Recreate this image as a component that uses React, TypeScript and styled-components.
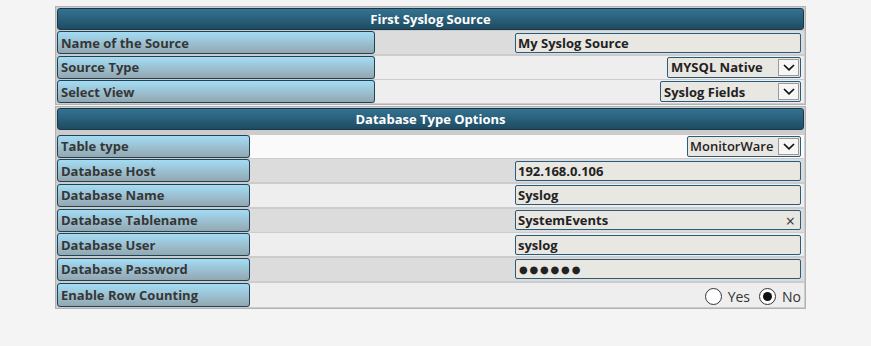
import React from 'react'
import styled, { createGlobalStyle } from 'styled-components'

const GlobalStyle = createGlobalStyle`
  body {
    margin: 0;
    background: #f4f4f4;
    font-family: 'Open Sans', 'DejaVu Sans', sans-serif;
  }
`

interface Row {
  label: string,
  bg: string,
  field: React.ReactNode,
}

const Page = styled.div`
  padding: 6px 0 0 55px;
  width: 751px;
`

const Section = styled.div<{ $after: number }>`
  border: 1px solid #b2b2b2;
  background: #cccccc;
  padding: 1px;
  display: flex;
  flex-direction: column;
  gap: 1.67px;
  margin-bottom: 0.67px;

  > :first-child {
    margin-bottom: ${props => props.$after}px;
  }
`

const Header = styled.div`
  height: 22px;
  box-sizing: border-box;
  border: 1px solid #17374a;
  border-radius: 3px;
  background: linear-gradient(#347392, #1f4b62);
  color: #ffffff;
  font-size: 13px;
  font-weight: 700;
  display: flex;
  align-items: center;
  justify-content: center;
`

const RowLine = styled.div<{ $tall?: boolean }>`
  display: flex;
  height: ${props => (props.$tall ? 24 : 23)}px;
`

const Label = styled.div<{ $width: number }>`
  width: ${props => props.$width}px;
  flex: none;
  box-sizing: border-box;
  border: 1px solid #1e4357;
  border-radius: 3px;
  background: linear-gradient(#a3dcf4, #93a7b1);
  color: #363636;
  font-size: 13px;
  font-weight: 700;
  padding-left: 3px;
  display: flex;
  align-items: center;
`

const Value = styled.div<{ $bg: string }>`
  flex: 1;
  background: ${props => props.$bg};
  display: flex;
  align-items: center;
  justify-content: flex-end;
  padding-right: 3px;
`

const Field = styled.div`
  position: relative;
  width: 286px;
  height: 20px;
  box-sizing: border-box;
  border: 1px solid #2b5b7b;
  border-radius: 2px;
  background: #e9e7e2;
  color: #222222;
  font-size: 13px;
  font-weight: 700;
  padding-left: 2px;
  display: flex;
  align-items: center;
`

const Dots = styled.span`
  font-size: 10px;
  letter-spacing: 1.8px;
  padding-left: 1px;
`

const Clear = styled.span`
  position: absolute;
  right: 5px;
  top: -1px;
  font-size: 16px;
  font-weight: 400;
  color: #333333;
`

const Select = styled.div<{ $width: number, $light?: boolean }>`
  width: ${props => props.$width}px;
  height: 21px;
  box-sizing: border-box;
  border: 1px solid #2b5b7b;
  border-radius: 2px;
  background: #e9e7e2;
  color: #222222;
  font-size: 13px;
  font-weight: ${props => (props.$light ? 600 : 700)};
  display: flex;
  align-items: center;
  padding-left: ${props => (props.$light ? 2 : 3)}px;
`

const SelectText = styled.span`
  flex: 1;
  white-space: nowrap;
`

const Arrow = styled.span`
  width: 21px;
  height: 17px;
  flex: none;
  margin-right: 1px;
  box-sizing: border-box;
  border: 1px solid #9a9a9a;
  background: #f6f6f6;
  display: flex;
  align-items: center;
  justify-content: center;
`

const Radios = styled.div`
  display: flex;
  align-items: center;
  font-size: 14px;
  color: #333333;
  padding-top: 3px;
`

const Radio = styled.span<{ $checked?: boolean }>`
  width: 17px;
  height: 17px;
  box-sizing: border-box;
  border-radius: 50%;
  border: 1px solid #333333;
  background: #ffffff;
  display: inline-flex;
  align-items: center;
  justify-content: center;
  margin: 0 6px 0 9px;

  &::after {
    content: '';
    width: 9px;
    height: 9px;
    border-radius: 50%;
    background: ${props => (props.$checked ? '#111111' : 'transparent')};
  }
`

const Chevron = () => (
  <svg width="12" height="7" viewBox="0 0 12 7">
    <path d="M1 1 L6 5.8 L11 1" fill="none" stroke="#111" strokeWidth="1.7" />
  </svg>
)

const DropDown = ({ text, width, light }: { text: string, width: number, light?: boolean }) => (
  <Select $width={width} $light={light}>
    <SelectText>{text}</SelectText>
    <Arrow><Chevron /></Arrow>
  </Select>
)

const sourceRows: Row[] = [
  { label: 'Name of the Source', bg: '#dcdcdc', field: <Field>My Syslog Source</Field> },
  { label: 'Source Type', bg: '#eeeeee', field: <DropDown text="MYSQL Native" width={134} /> },
  { label: 'Select View', bg: '#eeeeee', field: <DropDown text="Syslog Fields" width={141} /> },
]

const dbRows: Row[] = [
  { label: 'Table type', bg: '#fafafa', field: <DropDown text="MonitorWare" width={114} light /> },
  { label: 'Database Host', bg: '#dcdcdc', field: <Field>192.168.0.106</Field> },
  { label: 'Database Name', bg: '#eeeeee', field: <Field>Syslog</Field> },
  {
    label: 'Database Tablename',
    bg: '#dcdcdc',
    field: <Field>SystemEvents<Clear>×</Clear></Field>,
  },
  { label: 'Database User', bg: '#eeeeee', field: <Field>syslog</Field> },
  { label: 'Database Password', bg: '#dcdcdc', field: <Field><Dots>●●●●●●</Dots></Field> },
]

const App: React.FC = () => {
  return (
    <Page>
      <GlobalStyle />
      <Section $after={-0.67}>
        <Header>First Syslog Source</Header>
        {sourceRows.map(row => (
          <RowLine key={row.label}>
            <Label $width={318}>{row.label}</Label>
            <Value $bg={row.bg}>{row.field}</Value>
          </RowLine>
        ))}
      </Section>
      <Section $after={3}>
        <Header>Database Type Options</Header>
        {dbRows.map(row => (
          <RowLine key={row.label}>
            <Label $width={193}>{row.label}</Label>
            <Value $bg={row.bg}>{row.field}</Value>
          </RowLine>
        ))}
        <RowLine $tall>
          <Label $width={193}>Enable Row Counting</Label>
          <Value $bg="#eeeeee">
            <Radios>
              <Radio />Yes
              <Radio $checked />No
            </Radios>
          </Value>
        </RowLine>
      </Section>
    </Page>
  )
}

export default App
